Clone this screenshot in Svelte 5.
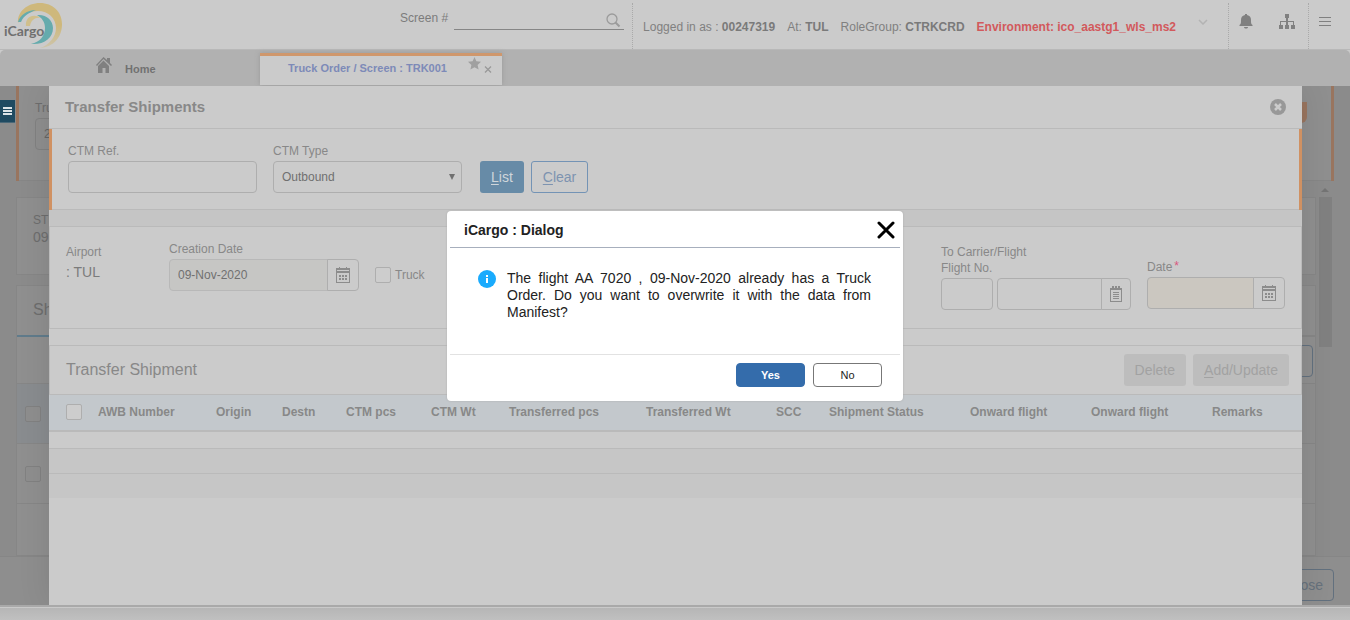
<script>
  const columns = [
    { label: 'AWB Number', width: 118 },
    { label: 'Origin', width: 66 },
    { label: 'Destn', width: 64 },
    { label: 'CTM pcs', width: 85 },
    { label: 'CTM Wt', width: 78 },
    { label: 'Transferred pcs', width: 137 },
    { label: 'Transferred Wt', width: 130 },
    { label: 'SCC', width: 53 },
    { label: 'Shipment Status', width: 141 },
    { label: 'Onward flight', width: 121 },
    { label: 'Onward flight', width: 121 },
    { label: 'Remarks', width: 0 }
  ];
  let creationDate = $state('09-Nov-2020');
</script>

{#snippet calendar()}
  <svg width="14" height="16" viewBox="0 0 14 16" fill="#8c8c8c">
    <path fill-rule="evenodd" d="M0 1h14v15H0zM1 6v9h12V6zM1 3v1h12V3z" />
    <path d="M3 0h1v3H3zM10 0h1v3h-1z" />
    <path d="M3 8h2v2H3zM6 8h2v2H6zM9 8h2v2H9zM3 11h2v2H3zM6 11h2v2H6zM9 11h2v2H9z" />
  </svg>
{/snippet}

<div class="app">
  <header>
    <svg class="logo" width="64" height="49" viewBox="0 0 64 49" role="img" aria-label="iCargo">
      <defs>
        <linearGradient id="gold" x1="0" y1="0" x2="0" y2="1">
          <stop offset="0.5" stop-color="#ceb87c" />
          <stop offset="1" stop-color="#cdc5ac" />
        </linearGradient>
      </defs>
      <path fill="url(#gold)" d="M18 23C17 12 27 3 40 3c13 0 22 9 22 21 0 13-8 23-22 24 9-3 16-11 16-20 0-10-8-17-18-17-9 0-17 4-20 12z" />
      <path fill="#d0bf8c" d="M26 26c-1-9 7-13 15-8-6-1-10 2-11 8z" />
      <path fill="#65abad" d="M18 22c2-7 9-12 18-12-7 3-12 5-15 12zM37 15c9-1 16 5 16 13 0 10-9 17-22 16 9-2 14-8 14-16 0-6-3-10-8-13z" />
      <text x="4" y="36">iCargo</text>
    </svg>
    <div class="search">
      <label for="screen-no">Screen #</label>
      <div class="search-box">
        <input id="screen-no" type="text" />
        <svg width="15" height="15" viewBox="0 0 15 15" fill="none" stroke="#9b9b9b"><circle cx="6" cy="6" r="5" stroke-width="1.3" /><path stroke-width="2" d="M9.500 9.500l4 4" /></svg>
      </div>
    </div>
    <div class="session">
      <span>Logged in as : <b>00247319</b></span>
      <span>At: <b>TUL</b></span>
      <span>RoleGroup: <b>CTRKCRD</b></span>
      <b class="env">Environment: ico_aastg1_wls_ms2</b>
      <button class="chevron" aria-label="Session details"><svg width="10" height="6" viewBox="0 0 10 6" fill="none" stroke="#b3b3b3" stroke-width="1.500"><path d="M1 1l4 4 4-4" /></svg></button>
    </div>
    <div class="tools">
      <button aria-label="Notifications"><svg width="14" height="15" viewBox="0 0 14 15" fill="#808080"><path d="M6 0h2v1c3 .5 4 2.500 4 5 0 3 0 4 1.500 5v1H.5v-1C2 10 2 9 2 6c0-2.500 1-4.500 4-5zM5 13h4c0 1-1 1.500-2 1.500S5 14 5 13z" /></svg></button>
      <button aria-label="Site map"><svg width="16" height="16" viewBox="0 0 16 16" fill="#808080"><path d="M6 0h4v4H6zM0 11h4v4H0zM6 11h4v4H6zM12 11h4v4h-4z" /><path d="M7 4h2v7H7zM1 7h14v4h-1V8H2v3H1z" /></svg></button>
    </div>
    <button class="menu" aria-label="Menu"><svg width="12" height="9" viewBox="0 0 12 9" fill="#808080"><path d="M0 0h12v1H0zM0 4h12v1H0zM0 8h12v1H0z" /></svg></button>
  </header>

  <nav>
    <a class="home" href="#home">
      <svg width="16" height="16" viewBox="0 0 16 16" fill="#808080"><path d="M7.500 0L11 3V1h3v5l2 2-1 1-7.500-7L1 9 0 8z" /><path d="M7.500 3.500L13 9v7H9.500v-5h-3v5H2V9z" /></svg>
      <span>Home</span>
    </a>
    <div class="tab">
      <a href="#trk001">Truck Order / Screen : TRK001</a>
      <button class="star" aria-label="Favourite"><svg width="13" height="13" viewBox="0 0 13 13" fill="#a0a0a0"><path d="M6.500 0l1.900 4.300 4.600.5-3.400 3.100 1 4.600-4.100-2.300-4.100 2.300 1-4.600L0 4.800l4.600-.5z" /></svg></button>
      <button class="shut" aria-label="Close tab"><svg width="8" height="7" viewBox="0 0 8 7" fill="none" stroke="#999" stroke-width="1.300"><path d="M1 .5l6 6M7 .5l-6 6" /></svg></button>
    </div>
  </nav>

  <main>
    <div class="under">
      <section class="u-filter">
        <label for="u-truck">Tru</label>
        <input id="u-truck" type="text" value="2" />
        <i class="knob"></i>
      </section>
      <div class="u-scroll">
        <div class="u-content">
          <section class="u-info">ST<br /><b>09</b></section>
          <section class="u-ship">
            <h3>Sh</h3>
            <div class="u-bar"><span class="u-more"></span></div>
            <div class="u-row head"><input type="checkbox" aria-label="Select all shipments" /></div>
            <div class="u-row"><input type="checkbox" aria-label="Select shipment" /></div>
            <div class="u-rest"></div>
          </section>
        </div>
        <div class="u-track">
          <svg width="8" height="4" viewBox="0 0 8 4" fill="#747474"><path d="M4 0l4 4H0z" /></svg>
          <i></i>
        </div>
      </div>
      <div class="u-foot"><button>Close</button></div>
    </div>

    <div class="modal">
      <div class="modal-head">
        <h1>Transfer Shipments</h1>
        <button aria-label="Close transfer shipments"><svg width="16" height="16" viewBox="0 0 16 16"><circle cx="8" cy="8" r="8" fill="#989898" /><path fill="none" stroke="#cbcbcb" stroke-width="2.500" d="M5 5l6 6M11 5l-6 6" /></svg></button>
      </div>

      <form class="filter" onsubmit={(e) => e.preventDefault()}>
        <div class="field wide"><label for="ctm-ref">CTM Ref.</label><input id="ctm-ref" type="text" /></div>
        <div class="field wide">
          <label for="ctm-type">CTM Type</label>
          <div class="pick"><select id="ctm-type"><option>Outbound</option></select><i></i></div>
        </div>
        <div class="actions">
          <button class="list"><u>L</u>ist</button>
          <button class="clear" type="reset"><u>C</u>lear</button>
        </div>
      </form>

      <div class="band"></div>

      <section class="details">
        <div class="airport"><span>Airport</span><span class="value">: TUL</span></div>
        <div class="field created">
          <label for="created">Creation Date</label>
          <div class="group"><input id="created" type="text" bind:value={creationDate} readonly /><button aria-label="Pick creation date">{@render calendar()}</button></div>
        </div>
        <label class="truck"><input type="checkbox" />Truck</label>
        <div class="carrier">
          <label for="carrier">To Carrier/Flight<br />Flight No.</label>
          <div class="pair">
            <input id="carrier" type="text" />
            <div class="group flight"><input type="text" aria-label="Flight number" /><button aria-label="Flight list">
              <svg width="12" height="16" viewBox="0 0 12 16" fill="#8c8c8c"><path fill-rule="evenodd" d="M0 2h12v14H0zM1 4v11h10V4z" /><path d="M2 0h2v3H2zM5 0h2v3H5zM8 0h2v3H8zM3 6h6v1H3zM3 8h6v1H3zM3 10h6v1H3zM3 12h6v1H3z" /></svg>
            </button></div>
          </div>
        </div>
        <div class="field date">
          <label for="date">Date<sup>*</sup></label>
          <div class="group"><input id="date" type="text" required /><button aria-label="Pick flight date">{@render calendar()}</button></div>
        </div>
      </section>

      <section class="shipments">
        <div class="title">
          <h2>Transfer Shipment</h2>
          <button disabled>Delete</button>
          <button disabled><u>A</u>dd/Update</button>
        </div>
        <table>
          <colgroup>
            <col class="check-col" />
            {#each columns as c}
              <col style:width={c.width ? `${c.width}px` : 'auto'} />
            {/each}
          </colgroup>
          <thead>
            <tr>
              <th><input type="checkbox" aria-label="Select all" /></th>
              {#each columns as c}<th>{c.label}</th>{/each}
            </tr>
          </thead>
        </table>
        <div class="blank"></div>
        <div class="stripe"></div>
        <div class="stripe"></div>
      </section>
    </div>

    <button class="side" aria-label="Open side menu"><svg width="9" height="8" viewBox="0 0 9 8" fill="#dde4e8"><path d="M0 0h9v2H0zM0 3h9v2H0zM0 6h9v2H0z" /></svg></button>
  </main>

  <footer></footer>

  <div class="dialog" role="dialog" aria-modal="true" aria-labelledby="dlg-title">
    <div class="dlg-head">
      <h2 id="dlg-title">iCargo : Dialog</h2>
      <button aria-label="Close dialog"><svg width="18" height="18" viewBox="0 0 18 18" fill="none" stroke="#000" stroke-width="3"><path d="M2 2l14 14M16 2L2 16" stroke-linecap="round" /></svg></button>
    </div>
    <div class="dlg-body">
      <svg width="18" height="18" viewBox="0 0 18 18"><circle cx="9" cy="9" r="9" fill="#1aabfd" /><path fill="#fff" d="M8 5h2v2H8zM8 8h2v5H8z" /></svg>
      <p>The flight AA 7020 , 09-Nov-2020 already has a Truck Order. Do you want to overwrite it with the data from Manifest?</p>
    </div>
    <div class="dlg-foot">
      <button class="yes">Yes</button>
      <button>No</button>
    </div>
  </div>
</div>

<style>
  :global(body) { margin: 0; }
  .app, .app * { box-sizing: border-box; }
  .app {
    min-height: 100vh;
    display: flex;
    flex-direction: column;
    position: relative;
    background: #cbcbcb;
    color: #888;
    font: 12px/16px "Liberation Sans", Arial, sans-serif;
  }
  button, input, select { font: inherit; color: inherit; margin: 0; }
  button { padding: 0; border: 0; background: none; display: flex; align-items: center; justify-content: center; }
  h1, h2, h3, p { margin: 0; }
  svg { display: block; flex: none; }
  a { color: inherit; text-decoration: none; }
  input[type="text"] { height: 32px; width: 100%; min-width: 0; padding: 0 8px; border: 1px solid #aeaeae; border-radius: 4px; background: transparent; color: #707070; }
  input[type="checkbox"] { appearance: none; width: 16px; height: 16px; border: 1px solid #aeaeae; border-radius: 2px; background: #cdcdcd; display: block; flex: none; }

  header { height: 50px; display: flex; border-bottom: 1px solid #b8b8b8; }
  .logo text { font: bold 14px Lato, "Liberation Sans", sans-serif; fill: #707070; }
  .search { margin-left: auto; display: flex; gap: 6px; padding: 10px 8px 0 0; color: #7c7c7c; }
  .search-box { display: flex; height: 20px; width: 170px; border-bottom: 1px solid #868686; padding: 3px 3px 0 0; }
  .search-box input[type="text"] { border: 0; height: 16px; flex: 1; }
  .session { display: flex; gap: 12px; padding: 16px 20px 0 10px; white-space: nowrap; color: #808080; }
  .session, .tools, .menu { border-left: 1px dotted #aaa; margin-top: 3px; }
  .session b { color: #7a7a7a; }
  .session .env { color: #d2595c; }
  .chevron { align-self: flex-start; margin-left: 10px; }
  .tools { display: flex; gap: 26px; width: 80px; padding: 11px 0 0 10px; align-items: flex-start; }
  .menu { width: 42px; padding: 14px 9px 0 0; align-items: flex-start; }

  nav { height: 36px; display: flex; background: #b1b1b1; border-radius: 5px 5px 0 0; font-weight: bold; font-size: 11px; }
  .home { width: 260px; padding: 7px 0 0 96px; display: flex; gap: 13px; color: #717171; }
  .home span { padding-top: 4px; }
  .tab { width: 242px; margin-top: 3px; height: 32px; display: flex; align-items: flex-start; border-top: 3px solid #cf976c; background: #cbcbcb; padding-left: 28px; box-shadow: 0 0 5px #999; }
  .tab a { color: #7d8ab8; padding-top: 4px; width: 180px; white-space: nowrap; }
  .star { margin-top: 1px; }
  .shut { margin: 10px 0 0 3px; }

  main { flex: 1; display: grid; position: relative; overflow: hidden; background: #8a8a8a; }
  .under, .modal { grid-area: 1 / 1; min-width: 0; }
  .under { display: flex; flex-direction: column; color: #6d6d6d; background: #8b8b8b; }
  .under input { border-color: #818181; background: #8e8e8e; }
  .u-filter { position: relative; height: 95px; margin: 0 16px; border: solid #99755f; border-width: 0 3px; padding: 14px 0 0 16px; background: #8f8f8f; box-shadow: inset 0 -1px #868686; }
  .u-filter input[type="text"] { display: block; width: 120px; margin-top: 2px; color: #656565; }
  .knob { position: absolute; right: 24px; top: 16px; width: 24px; height: 21px; background: #99755f; border-radius: 0 0 6px 0; }
  .u-scroll { flex: 1; display: flex; padding: 16px 16px 0; }
  .u-content { flex: 1; display: flex; flex-direction: column; }
  .u-info { height: 78px; border: 1px solid #868686; padding: 14px 16px; line-height: 17px; background: #8f8f8f; }
  .u-info b { font-weight: normal; font-size: 14px; }
  .u-ship { flex: 1; display: flex; flex-direction: column; margin-top: 10px; border: 1px solid #868686; background: #8f8f8f; }
  .u-ship h3 { height: 51px; border-bottom: 2px solid; border-image: linear-gradient(90deg, #607b8b 50%, #868686 50%) 2; border-width: 0 0 2px; padding-left: 16px; font: 16px/48px "Liberation Sans", sans-serif; }
  .u-bar { height: 47px; border-bottom: 1px solid #868686; padding: 8px 2px 0; display: flex; justify-content: flex-end; }
  .u-more { width: 40px; height: 32px; border: 1px solid #62707e; border-radius: 4px; }
  .u-row { height: 60px; border-bottom: 1px solid #868686; padding: 22px 8px; }
  .u-row.head { background: linear-gradient(90deg, #898c8f 50%, #8e8e8e 50%); }
  .u-rest { flex: 1; }
  .u-track { width: 18px; display: flex; flex-direction: column; align-items: center; margin-top: -9px; gap: 5px; }
  .u-track i { width: 13px; height: 150px; background: #808080; }
  .u-foot { height: 49px; border-top: 1px solid #868686; padding: 12px 16px; display: flex; justify-content: flex-end; background: #8e8e8e; }
  .u-foot button { height: 32px; padding: 0 10px; border: 1px solid #62707e; border-radius: 4px; color: #66717c; font-size: 14px; }

  .modal { margin: 0 48px 0 49px; position: relative; background: #cbcbcb; box-shadow: 0 0 30px rgba(0, 0, 0, .1); }
  .modal-head { height: 43px; padding: 0 16px; display: flex; align-items: center; justify-content: space-between; border-bottom: 1px solid #bababa; }
  h1 { font-size: 15px; line-height: 20px; }
  .filter { height: 81px; display: flex; align-items: flex-end; gap: 16px; padding: 0 16px 17px; border: solid #d09162; border-width: 0 3px; box-shadow: inset 0 -1px #bababa; }
  .field { display: flex; flex-direction: column; gap: 2px; }
  .wide { width: 189px; }
  .pick { position: relative; color: #707070; }
  select { appearance: none; width: 100%; height: 32px; border: 1px solid #aeaeae; border-radius: 4px; padding: 0 8px; background: transparent; display: block; }
  .pick i { position: absolute; right: 7px; top: 13px; border: solid transparent; border-width: 6px 3px 0; border-top-color: #707070; pointer-events: none; }
  .actions { display: flex; gap: 7px; margin-left: 2px; }
  .actions button { height: 32px; padding: 0 11px; border-radius: 3px; font-size: 14px; }
  .actions .list { background: #678ba7; color: #cfd6db; }
  .actions .clear { border: 1px solid #7393b5; color: #7d93b0; }
  u { text-underline-offset: 2px; }
  .band { height: 16px; background: #c5c5c5; }

  .details { height: 103px; display: flex; align-items: flex-start; border: 1px solid #bababa; padding: 14px 16px 0; }
  .airport { width: 103px; padding-top: 3px; display: flex; flex-direction: column; gap: 4px; }
  .value { font-size: 14px; color: #7b7b7b; }
  .created { width: 190px; }
  .group { display: flex; }
  .group input[type="text"] { flex: 1; border-radius: 4px 0 0 4px; }
  .group button { width: 32px; margin-left: -1px; border: 1px solid #aeaeae; border-radius: 0 4px 4px 0; }
  .group input[readonly] { background: #c6c6c4; border-color: #b8b8b8; }
  .truck { display: flex; gap: 4px; margin: 26px 0 0 16px; }
  .carrier { margin-left: auto; padding-top: 3px; width: 190px; }
  .pair { display: flex; gap: 4px; margin-top: 2px; }
  .pair > input[type="text"] { width: 52px; }
  .flight { flex: 1; }
  .flight button { width: 30px; }
  .date { width: 138px; margin-left: 16px; padding-top: 18px; }
  .date input[type="text"] { background: #cbc7c0; }
  sup { color: #d9577f; font-size: 12px; line-height: 12px; vertical-align: 1px; margin-left: 2px; }

  .shipments { margin-top: 16px; }
  .title { height: 50px; display: flex; align-items: center; gap: 7px; padding: 0 12px 0 16px; border: 1px solid #bababa; }
  .title h2 { flex: 1; font-size: 16px; line-height: 20px; font-weight: normal; }
  .title button { height: 32px; padding: 0 11px; border-radius: 3px; background: #bdbdbd; color: #a2a2a2; font-size: 14px; }
  table { width: 100%; table-layout: fixed; border-collapse: separate; border-spacing: 0; background: #c3c8cc; }
  .check-col { width: 49px; }
  th { height: 37px; padding: 0 0 1px; text-align: left; white-space: nowrap; border-bottom: 2px solid #bababa; }
  th input[type="checkbox"] { margin-left: 17px; }
  .blank { height: 16px; }
  .stripe { height: 25px; background: #c6c6c6; border-top: 1px solid #bababa; }

  .side { position: absolute; left: 0; top: 14px; width: 15px; height: 23px; background: #1f4a61; border-bottom: 1px solid #4a6878; }
  footer { height: 15px; border-top: 2px solid #a9a9a9; background: linear-gradient(#b5b5b5, #c0c0c0); box-shadow: inset 0 1px #c9c9c9; }

  .dialog { position: absolute; left: 50%; top: 211px; width: 456px; transform: translateX(-50%); padding: 0 3px; border-radius: 4px; background: #fff; color: #222; box-shadow: 0 0 2px #aaa; }
  .dlg-head { height: 37px; display: flex; align-items: center; justify-content: space-between; padding: 1px 5px 0 14px; border-bottom: 1px solid #a7afbd; }
  .dlg-head h2 { font-size: 14px; line-height: 18px; }
  .dlg-body { display: flex; gap: 11px; min-height: 106px; padding: 22px 29px 0 28px; }
  .dlg-body p { flex: 1; font-size: 14px; line-height: 17px; text-align: justify; }
  .dlg-foot { display: flex; justify-content: flex-end; gap: 8px; padding: 8px 18px 14px; border-top: 1px solid #e2e2e2; }
  .dlg-foot button { width: 69px; height: 24px; border: 1px solid #777; border-radius: 4px; font-size: 11px; }
  .dlg-foot .yes { background: #346cab; border-color: #346cab; color: #fff; font-weight: bold; }
</style>
